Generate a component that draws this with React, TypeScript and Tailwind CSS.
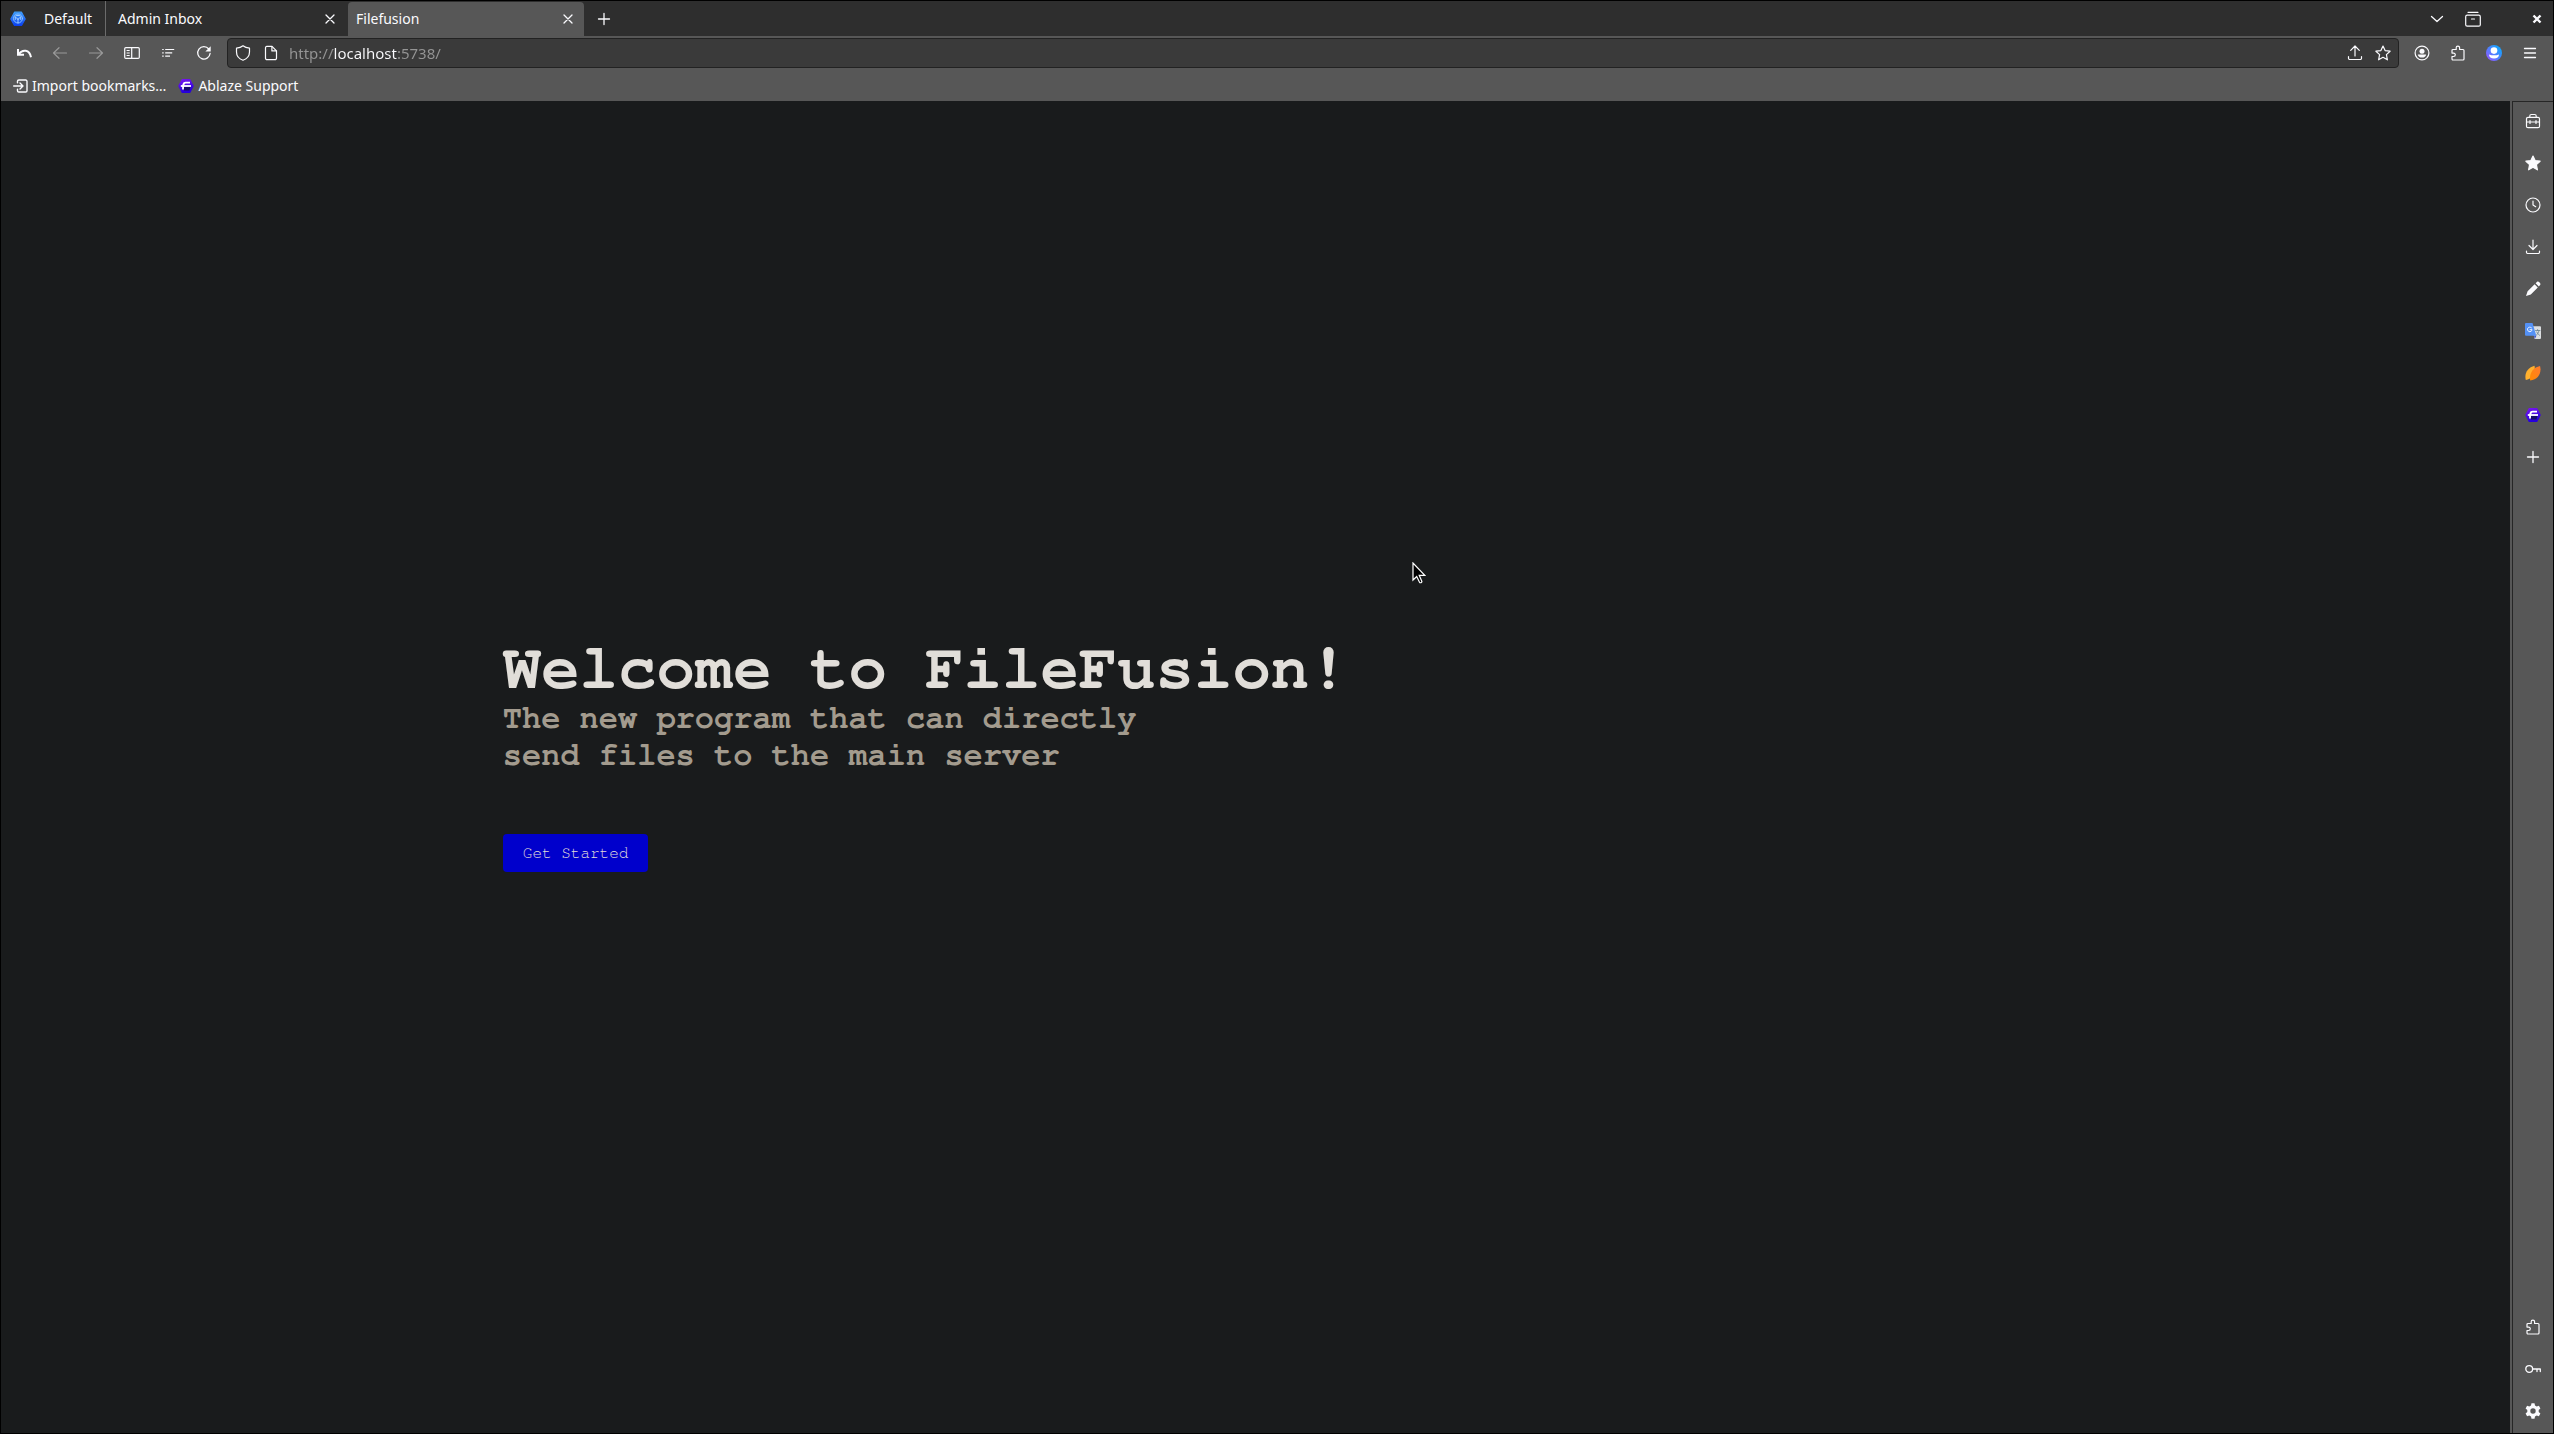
import type { ReactNode } from "react";

function Icon({ children, className = "h-4 w-4", box = 16 }: { children: ReactNode; className?: string; box?: number }) {
  return (
    <svg
      viewBox={`0 0 ${box} ${box}`}
      className={`shrink-0 ${className}`}
      fill="none"
      stroke="currentColor"
      strokeWidth="1.2"
      strokeLinecap="round"
      strokeLinejoin="round"
      aria-hidden="true"
    >
      {children}
    </svg>
  );
}

const UndoIcon = () => (
  <Icon>
    <path d="M3 9C6.500 4 13.500 4.500 15 12.300" strokeWidth="2" strokeLinecap="butt" />
    <path d="M2 4V9.800H8" strokeWidth="2" strokeLinecap="butt" strokeLinejoin="miter" />
  </Icon>
);
const BackIcon = () => (
  <Icon><path d="M14.500 8H1.500M7 2.700L1.500 8L7 13.300" /></Icon>
);
const ForwardIcon = () => (
  <Icon><path d="M1.500 8H14.500M9 2.700L14.500 8L9 13.300" /></Icon>
);
const SidebarIcon = () => (
  <Icon>
    <rect x=".7" y="2.600" width="14.600" height="10.800" rx="1.200" />
    <path d="M7.700 2.600V13.400" />
    <path d="M3 5.500H5.300M3 8H5.300M3 10.500H5.300" strokeWidth="1" />
  </Icon>
);
const ListIcon = () => (
  <Icon>
    <path d="M5.200 4.500H14.200M5.200 7.800H12.200M5.200 11.100H10" strokeLinecap="butt" />
    <path d="M2.200 4.500H3.700M2.200 7.800H3.700M2.200 11.100H3.700" strokeLinecap="butt" />
  </Icon>
);
const ReloadIcon = () => (
  <Icon>
    <path d="M12.800 4A6.200 6.200 0 1 0 14.100 8.500" strokeWidth="1.300" />
    <path d="M14.700 1.200V6.500H9.400Z" fill="currentColor" stroke="none" />
  </Icon>
);
const ShieldIcon = () => (
  <Icon><path d="M8 .8C9.800 2.300 12 3 14.500 3.200V7C14.500 10.700 12 13.800 8 15.300C4 13.800 1.500 10.700 1.500 7V3.200C4 3 6.200 2.300 8 .8Z" /></Icon>
);
const PageIcon = () => (
  <Icon>
    <path d="M3.700 1.300H9L13.500 5.800V13.200A1.500 1.500 0 0 1 12 14.700H4A1.500 1.500 0 0 1 2.500 13.200V2.800A1.500 1.500 0 0 1 3.700 1.300Z" />
    <path d="M8.900 1.500V5.900H13.300" />
  </Icon>
);
const ShareIcon = () => (
  <Icon><path d="M8 11V1.200M3.700 5.300L8 1L12.300 5.300M1.500 11.500V13.200A1.300 1.300 0 0 0 2.800 14.500H13.200A1.300 1.300 0 0 0 14.500 13.200V11.500" /></Icon>
);
const STAR = "M8 1L10.100 5.600L15.100 6.200L11.400 9.600L12.400 14.800L8 12.300L3.600 14.800L4.600 9.600L.9 6.200L5.900 5.600Z";
const StarIcon = ({ solid = false }: { solid?: boolean }) => (
  <Icon><path d={STAR} fill={solid ? "currentColor" : "none"} /></Icon>
);
const AccountIcon = () => (
  <Icon>
    <circle cx="8" cy="8" r="6.900" />
    <circle cx="8" cy="6.200" r="2.500" fill="currentColor" stroke="none" />
    <path d="M3.800 9.500H12.200C12 11.500 10.200 12.600 8 12.600S4 11.500 3.800 9.500Z" fill="currentColor" stroke="none" />
  </Icon>
);
const PuzzleIcon = () => (
  <Icon>
    <path d="M2 5.500A1 1 0 0 1 3 4.500H6.200V2.800A1.700 1.700 0 0 1 9.600 2.800V4.500H13A1 1 0 0 1 14 5.500V14A1 1 0 0 1 13 15H3A1 1 0 0 1 2 14V11.500H3.600A1.700 1.700 0 0 0 3.600 8.100H2Z" />
  </Icon>
);
const AvatarIcon = () => (
  <Icon>
    <defs>
      <linearGradient id="avatar" x1="0" y1="1" x2="1" y2="0">
        <stop offset="0.100" stopColor="#9059ff" />
        <stop offset="0.800" stopColor="#1aa1ff" />
      </linearGradient>
    </defs>
    <circle cx="8" cy="8" r="8" fill="url(#avatar)" stroke="none" />
    <circle cx="8" cy="5.600" r="3.300" fill="#fff" stroke="none" />
    <path d="M3 9.400C6 10.600 10 10.600 13 9.400C13 12 11 13.500 8 13.500S3 12 3 9.400Z" fill="#fff" stroke="none" />
  </Icon>
);
const MenuIcon = () => (
  <Icon><path d="M2.500 3.500H13.500M2.500 8H13.500M2.500 12.500H13.500" strokeWidth="1.300" /></Icon>
);
const ChevronIcon = () => (
  <Icon><path d="M2.500 5.500L8 10.500L13.500 5.500" strokeWidth="1.300" /></Icon>
);
const ArchiveIcon = () => (
  <Icon>
    <rect x=".7" y="4.200" width="14.600" height="11" rx="1.500" />
    <path d="M3 1.300H13M6.500 8H9.500" />
  </Icon>
);
const BoldCloseIcon = () => (
  <Icon><path d="M4.500 4.500L11.500 11.500M11.500 4.500L4.500 11.500" strokeWidth="2.400" strokeLinecap="butt" /></Icon>
);
const CloseIcon = () => (
  <Icon><path d="M4 4L12 12M12 4L4 12" strokeWidth="1.300" /></Icon>
);
const PlusIcon = () => (
  <Icon><path d="M8 2.500V13.500M2.500 8H13.500" strokeWidth="1.300" /></Icon>
);
const ImportIcon = () => (
  <Icon>
    <path d="M4.500 4.800V3.300A1.300 1.300 0 0 1 5.800 2H12.700A1.300 1.300 0 0 1 14 3.300V12.700A1.300 1.300 0 0 1 12.700 14H5.800A1.300 1.300 0 0 1 4.500 12.700V11.200" strokeWidth="1.400" />
    <path d="M.7 8H9.500M7 5L10 8L7 11" strokeWidth="1.400" />
  </Icon>
);
const ToolboxIcon = () => (
  <Icon>
    <rect x="1.500" y="4.300" width="13" height="10.400" rx="1.500" />
    <path d="M4.800 4.300V3A1.500 1.500 0 0 1 6.300 1.500H9.700A1.500 1.500 0 0 1 11.200 3V4.300M1.500 9H14.500M5 7.600V10.400M11 7.600V10.400" />
  </Icon>
);
const ClockIcon = () => (
  <Icon><circle cx="8" cy="8" r="7" /><path d="M8 4V8L10.700 9.700" /></Icon>
);
const DownloadIcon = () => (
  <Icon><path d="M8 1.200V10.300M4 6.500L8 10.500L12 6.500M1.500 12V13.200A1.300 1.300 0 0 0 2.800 14.500H13.200A1.300 1.300 0 0 0 14.500 13.200V12" /></Icon>
);
const PencilIcon = () => (
  <Icon>
    <path d="M9.600 3.200L12.800 6.400L5.800 13.400L1 15L2.600 10.200ZM10.600 2.200L11.900 .9C12.700 .3 13.600 .5 14.600 1.400S15.700 3.300 15.100 4.100L13.800 5.400Z" fill="currentColor" stroke="none" />
  </Icon>
);
const TranslateIcon = () => (
  <Icon>
    <path d="M7 3.200H15A1 1 0 0 1 16 4.200V15A1 1 0 0 1 15 16H9.500Z" fill="#dbdde0" stroke="none" />
    <path d="M9 12.500H11.500L9.800 16Z" fill="#3b4dc4" stroke="none" />
    <path d="M1 0H7.500L11.300 12.700H1A1 1 0 0 1 0 11.700V1A1 1 0 0 1 1 0Z" fill="#5491f5" stroke="none" />
    <path d="M6.500 4.800A2.300 2.300 0 1 0 7.100 6.700H5" stroke="#e8f0fe" strokeWidth="1" />
    <path d="M10.500 7.500H15M12.600 6.500V7.500M14 7.500C13.500 9.800 12.500 11 11.500 12M11.800 9C12.500 10.500 13.500 11.500 14.500 12.300" stroke="#68838f" strokeWidth=".8" />
  </Icon>
);
const LeavesIcon = () => (
  <Icon>
    <defs>
      <linearGradient id="leaf" x1="1" y1="0" x2="0" y2="1">
        <stop offset="0" stopColor="#ff7a30" />
        <stop offset="1" stopColor="#ff8a00" />
      </linearGradient>
    </defs>
    <path d="M9.500 .8C3 2.500-1 8 .8 15C7 14 11 8 9.500 .8Z" fill="#ffb02e" stroke="none" />
    <path d="M15 1C8 2.500 4 8.500 5.200 15.500C13 15 17 8 15 1Z" fill="url(#leaf)" stroke="none" />
  </Icon>
);
const AblazeIcon = () => (
  <Icon>
    <defs>
      <linearGradient id="ablaze" x1="0" y1="0" x2="0.300" y2="1">
        <stop offset="0" stopColor="#7a16f0" />
        <stop offset="1" stopColor="#2600dc" />
      </linearGradient>
    </defs>
    <path d="M4.200 1.500H11.800L15.200 8L11.800 14.500H4.200L.8 8Z" fill="url(#ablaze)" stroke="url(#ablaze)" />
    <path d="M6 9H12.500L11.500 12.500H6Z" fill="#150a68" stroke="none" />
    <path d="M12 4.600H7.500C5.200 4.600 5 7 5 11.500" stroke="#fff" strokeWidth="1.800" strokeLinecap="butt" />
    <path d="M2.800 8H13" stroke="#fff" strokeWidth="1.800" strokeLinecap="butt" />
  </Icon>
);
const WorkspaceIcon = () => (
  <Icon>
    <defs>
      <linearGradient id="workspace" x1="0" y1="0" x2="0" y2="1">
        <stop offset="0" stopColor="#3f9dfc" />
        <stop offset="1" stopColor="#0b40ee" />
      </linearGradient>
    </defs>
    <path d="M4.500 1.200H11.500L15.200 8L11.500 14.500H4.500L.8 8Z" fill="url(#workspace)" stroke="url(#workspace)" />
    <circle cx="8" cy="7.500" r="4.500" stroke="#8cc4ff" strokeWidth=".9" />
    <path d="M8 12V7.500M8 8.500L5.300 5.800M8 8.500L10.700 5.800M5.300 8.500V6M10.700 8.500V6M6.500 4.500H9.500" stroke="#a9d2ff" strokeWidth=".9" />
  </Icon>
);
const KeyIcon = () => (
  <Icon><circle cx="4.200" cy="8" r="3.400" strokeWidth="1.300" /><path d="M7.700 8H15.300V10.500M12 8V10.500" strokeWidth="1.300" /></Icon>
);
const GearIcon = () => (
  <Icon>
    <path
      fillRule="evenodd"
      d="M6.500 .3H9.500L10 2.500L11.700 3.500L13.900 2.800L15.400 5.400L13.700 7V9L15.400 10.600L13.900 13.200L11.700 12.500L10 13.500L9.500 15.700H6.500L6 13.500L4.300 12.500L2.100 13.200L.6 10.600L2.300 9V7L.6 5.400L2.100 2.800L4.300 3.500L6 2.500ZM8 5.300A2.700 2.700 0 1 0 8 10.700A2.700 2.700 0 1 0 8 5.300Z"
      fill="currentColor"
      stroke="none"
    />
  </Icon>
);

function ToolButton({ label, children, disabled = false }: { label: string; children: ReactNode; disabled?: boolean }) {
  return (
    <button
      type="button"
      aria-label={label}
      disabled={disabled}
      className="flex h-9 w-9 shrink-0 items-center justify-center disabled:text-[#999999]"
    >
      {children}
    </button>
  );
}

function TabStrip() {
  return (
    <div className="flex h-[35px] bg-[#2e2e2e]">
      <button type="button" className="flex w-[105px] items-center gap-[18px] border-r border-[#6b6b6b] pl-[9px]">
        <WorkspaceIcon />
        Default
      </button>
      <div className="flex w-[242px] items-center justify-between pr-2.5 pl-3">
        <button type="button">Admin Inbox</button>
        <button type="button" aria-label="Close Admin Inbox"><CloseIcon /></button>
      </div>
      <div className="mt-px flex w-[236px] items-center justify-between rounded-t bg-[#575757] pr-2 pb-px pl-2">
        <button type="button">Filefusion</button>
        <button type="button" aria-label="Close Filefusion"><CloseIcon /></button>
      </div>
      <button type="button" aria-label="New tab" className="flex w-10 items-center justify-center"><PlusIcon /></button>
      <div className="ml-auto flex items-center">
        <ToolButton label="List all tabs"><ChevronIcon /></ToolButton>
        <ToolButton label="Tab archive"><ArchiveIcon /></ToolButton>
        <button type="button" aria-label="Close window" className="ml-[30px] flex h-9 w-8 items-center justify-center"><BoldCloseIcon /></button>
      </div>
    </div>
  );
}

function Toolbar() {
  return (
    <nav className="flex h-[34px] items-center px-[5px]">
      <ToolButton label="Undo close tab"><UndoIcon /></ToolButton>
      <ToolButton label="Back" disabled><BackIcon /></ToolButton>
      <ToolButton label="Forward" disabled><ForwardIcon /></ToolButton>
      <ToolButton label="Toggle sidebar"><SidebarIcon /></ToolButton>
      <ToolButton label="Reader list"><ListIcon /></ToolButton>
      <ToolButton label="Reload"><ReloadIcon /></ToolButton>
      <div className="mx-[5px] flex h-[30px] flex-1 items-center rounded border border-[#222222] bg-[#3a3a3a] px-[7px]">
        <button type="button" aria-label="Tracking protection"><ShieldIcon /></button>
        <button type="button" aria-label="Page information" className="ml-3"><PageIcon /></button>
        <input
          aria-label="Address"
          defaultValue="http://localhost:5738/"
          className="ml-2.5 h-7 min-w-0 flex-1 bg-[linear-gradient(90deg,#959595_44px,#fbfbfe_44px,#fbfbfe_108px,#959595_108px)] bg-clip-text text-[15px] text-transparent outline-none"
        />
        <div className="flex items-center gap-3">
          <button type="button" aria-label="Share"><ShareIcon /></button>
          <button type="button" aria-label="Bookmark this page"><StarIcon /></button>
        </div>
      </div>
      <ToolButton label="Account"><AccountIcon /></ToolButton>
      <ToolButton label="Extensions"><PuzzleIcon /></ToolButton>
      <ToolButton label="Profile"><AvatarIcon /></ToolButton>
      <ToolButton label="Menu"><MenuIcon /></ToolButton>
    </nav>
  );
}

const panels = [
  { label: "Toolbox", icon: <ToolboxIcon /> },
  { label: "Bookmarks", icon: <StarIcon solid /> },
  { label: "History", icon: <ClockIcon /> },
  { label: "Downloads", icon: <DownloadIcon /> },
  { label: "Notes", icon: <PencilIcon /> },
  { label: "Translate", icon: <TranslateIcon /> },
  { label: "Leaves", icon: <LeavesIcon /> },
  { label: "Ablaze", icon: <AblazeIcon /> },
  { label: "Add panel", icon: <PlusIcon /> },
];

const tools = [
  { label: "Add-ons", icon: <PuzzleIcon /> },
  { label: "Passwords", icon: <KeyIcon /> },
  { label: "Settings", icon: <GearIcon /> },
];

function Welcome() {
  return (
    <main className="relative flex flex-1 flex-col justify-center bg-[#191b1c] pb-6 font-['FreeMono','Liberation_Mono',monospace]">
      <section className="flex flex-col items-start pl-[20%]">
        <h1 className="text-[64px] leading-[62px] font-bold text-[#e1ded9]">Welcome to FileFusion!</h1>
        <h2 className="text-[32px] leading-[37px] font-bold text-[#a39b8e]">
          The new program that can directly
          <br />
          send files to the main server
        </h2>
        <button type="button" className="mt-[60px] rounded bg-[#0000cc] px-5 py-2.5 text-base leading-[18px] text-[#e1ded9]">
          Get Started
        </button>
      </section>
      <svg viewBox="0 0 14 22" className="absolute top-[461px] left-[1411px] h-[22px] w-3.5" aria-hidden="true">
        <path d="M1 1V18L4.700 14.500L7.500 20.300C8.200 21.200 10.200 20.500 9.800 19.200L7.200 13.300H12.800Z" fill="#000" stroke="#fff" strokeWidth="1.200" />
      </svg>
    </main>
  );
}

export default function App() {
  return (
    <div className="flex h-screen flex-col border border-black bg-[#575757] font-['Noto_Sans',sans-serif] text-sm leading-5 text-[#fbfbfe]">
      <TabStrip />
      <Toolbar />
      <div className="flex h-[31px] items-center gap-3 pt-px pl-3">
        <button type="button" className="flex items-center gap-[3px]"><ImportIcon />Import bookmarks…</button>
        <a href="#support" className="flex items-center gap-1"><AblazeIcon />Ablaze Support</a>
      </div>
      <div className="flex min-h-0 flex-1">
        <Welcome />
        <aside className="ml-0.5 flex w-[41px] flex-col items-center justify-between border-t border-l border-[#262626] pb-1">
          <div className="flex flex-col gap-1.5 pt-px">
            {panels.map((p) => <ToolButton key={p.label} label={p.label}>{p.icon}</ToolButton>)}
          </div>
          <div className="flex flex-col gap-1.5">
            {tools.map((t) => <ToolButton key={t.label} label={t.label}>{t.icon}</ToolButton>)}
          </div>
        </aside>
      </div>
    </div>
  );
}
